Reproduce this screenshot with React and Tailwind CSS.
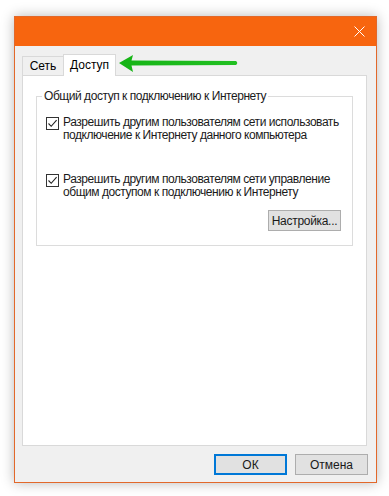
import React from "react";

function Check() {
  return (
    <span className="mt-[1px] flex h-[13px] w-[13px] shrink-0 items-center justify-center border border-[#333333] bg-white">
      <svg width="11" height="11" viewBox="0 0 11 11">
        <path d="M1.5 5.5 L4.2 8.3 L9.6 2.2" fill="none" stroke="#222" strokeWidth="1.1" />
      </svg>
    </span>
  );
}

export default function App() {
  return (
    <div className="h-[496px] w-[389px] bg-white pl-[14px] pt-[16px] font-['Liberation_Sans',Arial,sans-serif] text-[11px] text-black">
      <div className="flex h-[467px] w-[363px] flex-col border border-[#e2682a] bg-[#f0f0f0] shadow-[0_0_12px_rgba(0,0,0,0.28)]">
        {/* title bar */}
        <div className="flex h-[29px] shrink-0 items-center justify-end bg-[#f7650f] pr-[11px]">
          <svg width="11" height="11" viewBox="0 0 11 11">
            <path d="M0.5 0.5 L10.5 10.5 M10.5 0.5 L0.5 10.5" stroke="#fff" strokeWidth="1" />
          </svg>
        </div>
        {/* tabs */}
        <div className="relative mt-[8px] flex items-end pl-[7px]">
          <div className="flex h-[19px] w-[41px] items-center justify-center border border-b-0 border-r-0 border-[#d9d9d9] bg-[#f0f0f0] text-[12px]">
            Сеть
          </div>
          <div className="relative z-10 -mb-px flex h-[22px] w-[53px] items-center justify-center border border-b-0 border-[#d9d9d9] bg-white pb-[1px] text-[12px]">
            Доступ
          </div>
          <svg className="absolute left-[102px] top-[0px]" width="124" height="20" viewBox="0 0 124 20">
            <defs>
              <linearGradient id="g" x1="0" y1="0" x2="1" y2="0">
                <stop offset="0" stopColor="#16b416" />
                <stop offset="1" stopColor="#22c022" />
              </linearGradient>
            </defs>
            <path d="M2 9 L16 1 L14.5 6.5 L119 7 Q121.5 9 119 11 L14.5 11.5 L16 18 Z" fill="url(#g)" />
          </svg>
        </div>
        {/* panel */}
        <div className="ml-[7px] mr-[9px] h-[371px] border border-[#d9d9d9] bg-white px-[13px] pt-[13px]">
          <fieldset className="h-[157px] border border-[#dcdcdc] px-[9px] pb-[10px]">
            <legend className="ml-[-4px] whitespace-nowrap px-[2px] text-[12px] leading-[14px] tracking-[-0.45px] text-[#1a1a1a]">Общий доступ к подключению к Интернету</legend>
            <div className="mt-[13px] flex gap-[4px]">
              <Check />
              <div className="whitespace-nowrap text-[12px] leading-[13px] tracking-[-0.45px] text-[#1a1a1a]">
                Разрешить другим пользователям сети использовать
                <br />
                подключение к Интернету данного компьютера
              </div>
            </div>
            <div className="mt-[31px] flex gap-[4px]">
              <Check />
              <div className="whitespace-nowrap text-[12px] leading-[13px] tracking-[-0.45px] text-[#1a1a1a]">
                Разрешить другим пользователям сети управление
                <br />
                общим доступом к подключению к Интернету
              </div>
            </div>
            <div className="mt-[11px] flex justify-end pr-[2px]">
              <button className="flex h-[21px] w-[73px] items-center justify-center border border-[#adadad] bg-[#e1e1e1] text-[12px] tracking-[-0.3px] text-[#1a1a1a]">
                Настройка...
              </button>
            </div>
          </fieldset>
        </div>
        {/* bottom buttons */}
        <div className="mt-[8px] flex justify-end gap-[8px] pr-[8px]">
          <button className="flex h-[21px] w-[73px] items-center justify-center border-2 border-[#0078d7] bg-[#e1e1e1] text-[12px] text-[#1a1a1a]">
            ОК
          </button>
          <button className="flex h-[21px] w-[73px] items-center justify-center border border-[#adadad] bg-[#e1e1e1] text-[12px] text-[#1a1a1a]">
            Отмена
          </button>
        </div>
      </div>
    </div>
  );
}
